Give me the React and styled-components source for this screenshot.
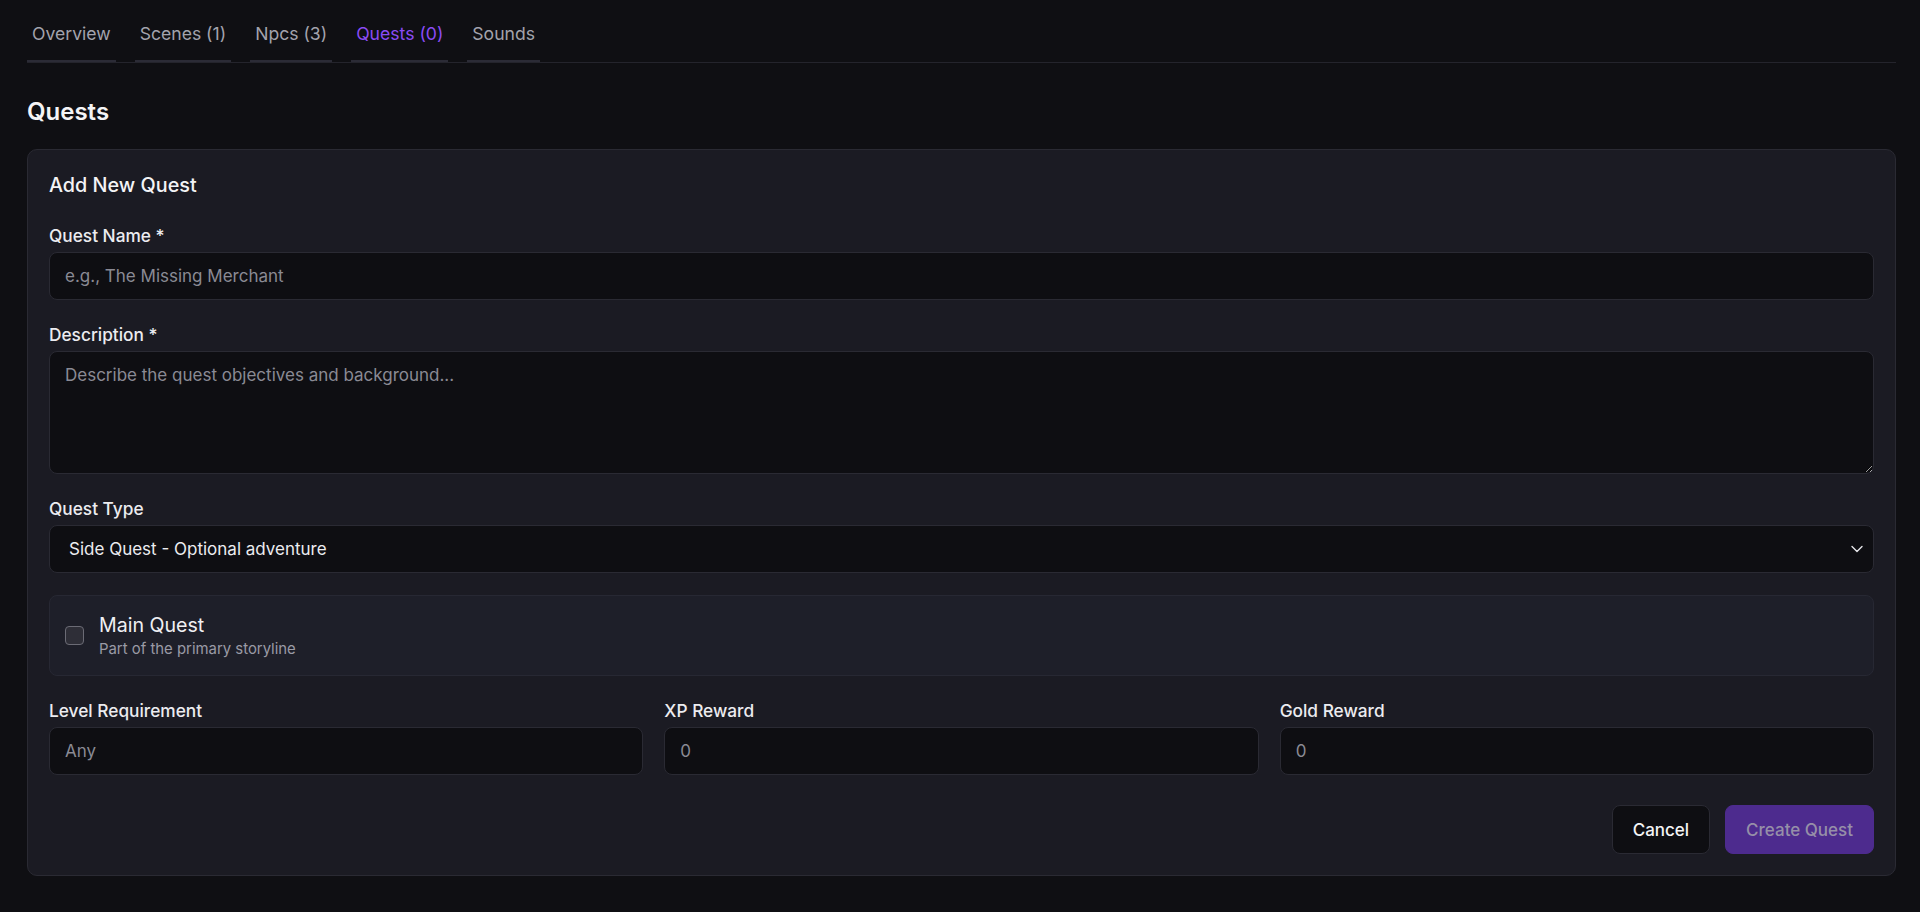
import React from "react";
import styled, { createGlobalStyle } from "styled-components";

const GlobalStyle = createGlobalStyle`
  * { box-sizing: border-box; }
  html, body {
    margin: 0;
    background: #0f0f13;
    color: #f0f0f3;
    font-family: Inter, "Noto Sans", "Liberation Sans", sans-serif;
  }
`;

const Page = styled.div`
  padding: 13px 24px 24px 27px;
`;

const TabBar = styled.div`
  display: flex;
  gap: 19px;
  border-bottom: 1px solid #24242c;
`;

const Tab = styled.button`
  background: none;
  border: none;
  border-bottom: 2px solid #2b2b36;
  padding: 8px 5px 13px;
  font-family: inherit;
  font-size: 17.6px;
  line-height: 26px;
  color: ${p => (p.active ? "#8b4cf5" : "#a3a3ad")};
  cursor: pointer;
`;

const Title = styled.h2`
  margin: 33px 0 21px;
  font-size: 24px;
  line-height: 32px;
  font-weight: 600;
  color: #f4f4f6;
`;

const Card = styled.div`
  background: #1b1b23;
  border: 1px solid #2a2a33;
  border-radius: 10px;
  padding: 21px;
`;

const CardTitle = styled.h3`
  margin: 0 0 24px;
  font-size: 19.8px;
  line-height: 28px;
  font-weight: 500;
  color: #f4f4f6;
`;

const Form = styled.div`
  display: flex;
  flex-direction: column;
  gap: 22px;
`;

const Field = styled.div`
  display: flex;
  flex-direction: column;
  gap: 3px;
`;

const Label = styled.label`
  font-size: 17.3px;
  line-height: 26px;
  font-weight: 450;
  color: #ececf0;
`;

const inputBase = `
  width: 100%;
  background: #0e0e12;
  border: 1px solid #2a2a33;
  border-radius: 8px;
  color: #ececf0;
  font-family: inherit;
  font-size: 17px;
  line-height: 26px;
  outline: none;
  &::placeholder { color: #8a8a94; }
`;

const Input = styled.input`
  ${inputBase}
  height: 48px;
  padding: 0 15px;
`;

const TextArea = styled.textarea`
  ${inputBase}
  height: 123px;
  padding: 10px 15px;
  resize: vertical;
  display: block;
`;

const SelectWrap = styled.div`
  position: relative;
`;

const Select = styled.select`
  ${inputBase}
  height: 48px;
  padding: 0 19px;
  appearance: none;
  -webkit-appearance: none;
`;

const Chevron = styled.svg`
  position: absolute;
  right: 11px;
  top: 50%;
  transform: translateY(-50%);
  pointer-events: none;
`;

const CheckPanel = styled.label`
  display: flex;
  align-items: center;
  gap: 15px;
  background: #1e1f29;
  border: 1px solid #272833;
  border-radius: 8px;
  padding: 15px;
  cursor: pointer;
`;

const Box = styled.span`
  width: 19px;
  height: 19px;
  flex: none;
  background: #2e2e37;
  border: 1px solid #6b6b75;
  border-radius: 4px;
`;

const CheckText = styled.div`
  display: flex;
  flex-direction: column;
`;

const CheckTitle = styled.span`
  font-size: 19.6px;
  line-height: 28px;
  color: #f0f0f3;
`;

const CheckSub = styled.span`
  font-size: 14.9px;
  line-height: 21px;
  color: #9a9aa5;
`;

const Row = styled.div`
  display: grid;
  grid-template-columns: repeat(3, 1fr);
  gap: 21px;
`;

const Actions = styled.div`
  display: flex;
  justify-content: flex-end;
  gap: 15px;
  margin-top: 8px;
`;

const Button = styled.button`
  height: 49px;
  padding: 0 20px;
  border-radius: 8px;
  font-family: inherit;
  font-size: 17px;
  font-weight: 450;
  border: 1px solid ${p => (p.primary ? "#4d2b8e" : "#2a2a33")};
  background: ${p => (p.primary ? "#4d2b8e" : "#0e0e12")};
  color: ${p => (p.primary ? "#968fa8" : "#f4f4f6")};
  cursor: ${p => (p.primary ? "not-allowed" : "pointer")};
`;

const tabs = [
  { id: "overview", label: "Overview" },
  { id: "scenes", label: "Scenes (1)" },
  { id: "npcs", label: "Npcs (3)" },
  { id: "quests", label: "Quests (0)" },
  { id: "sounds", label: "Sounds" }
];

export default function App() {
  return (
    <Page>
      <GlobalStyle />
      <TabBar>
        {tabs.map(t => (
          <Tab key={t.id} active={t.id === "quests"}>
            {t.label}
          </Tab>
        ))}
      </TabBar>

      <Title>Quests</Title>

      <Card>
        <CardTitle>Add New Quest</CardTitle>
        <Form>
          <Field>
            <Label>Quest Name *</Label>
            <Input placeholder="e.g., The Missing Merchant" />
          </Field>
          <Field>
            <Label>Description *</Label>
            <TextArea placeholder="Describe the quest objectives and background..." />
          </Field>
          <Field>
            <Label>Quest Type</Label>
            <SelectWrap>
              <Select defaultValue="side">
                <option value="main">Main Quest - Primary storyline</option>
                <option value="side">Side Quest - Optional adventure</option>
              </Select>
              <Chevron width="12" height="8" viewBox="0 0 12 8" fill="none">
                <path d="M1 1.5l5 5 5-5" stroke="#e6e6ea" strokeWidth="1.4" strokeLinecap="round" strokeLinejoin="round" />
              </Chevron>
            </SelectWrap>
          </Field>

          <CheckPanel>
            <Box />
            <CheckText>
              <CheckTitle>Main Quest</CheckTitle>
              <CheckSub>Part of the primary storyline</CheckSub>
            </CheckText>
          </CheckPanel>

          <Row>
            <Field>
              <Label>Level Requirement</Label>
              <Input placeholder="Any" />
            </Field>
            <Field>
              <Label>XP Reward</Label>
              <Input placeholder="0" />
            </Field>
            <Field>
              <Label>Gold Reward</Label>
              <Input placeholder="0" />
            </Field>
          </Row>

          <Actions>
            <Button>Cancel</Button>
            <Button primary>Create Quest</Button>
          </Actions>
        </Form>
      </Card>
    </Page>
  );
}
